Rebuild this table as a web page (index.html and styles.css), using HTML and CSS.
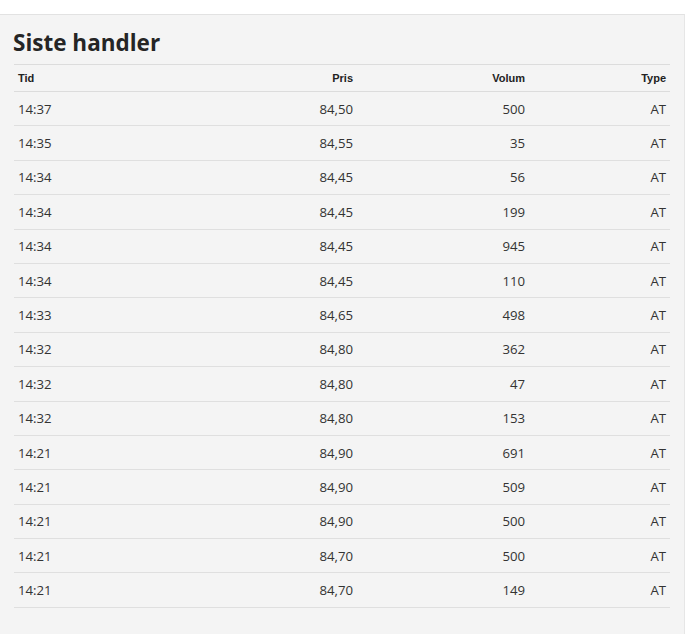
FILE: index.html
```html
<!DOCTYPE html>
<html lang="no">
<head>
<meta charset="utf-8">
<link rel="stylesheet" href="styles.css">
</head>
<body>
<div class="top"></div>
<section class="panel">
  <h2 class="title">Siste handler</h2>
  <table class="trades">
    <colgroup><col class="c1"><col class="c2"><col class="c3"><col class="c4"></colgroup>
    <thead>
      <tr><th class="l">Tid</th><th>Pris</th><th>Volum</th><th>Type</th></tr>
    </thead>
    <tbody>
      <tr><td class="l">14:37</td><td>84,50</td><td>500</td><td>AT</td></tr>
      <tr><td class="l">14:35</td><td>84,55</td><td>35</td><td>AT</td></tr>
      <tr><td class="l">14:34</td><td>84,45</td><td>56</td><td>AT</td></tr>
      <tr><td class="l">14:34</td><td>84,45</td><td>199</td><td>AT</td></tr>
      <tr><td class="l">14:34</td><td>84,45</td><td>945</td><td>AT</td></tr>
      <tr><td class="l">14:34</td><td>84,45</td><td>110</td><td>AT</td></tr>
      <tr><td class="l">14:33</td><td>84,65</td><td>498</td><td>AT</td></tr>
      <tr><td class="l">14:32</td><td>84,80</td><td>362</td><td>AT</td></tr>
      <tr><td class="l">14:32</td><td>84,80</td><td>47</td><td>AT</td></tr>
      <tr><td class="l">14:32</td><td>84,80</td><td>153</td><td>AT</td></tr>
      <tr><td class="l">14:21</td><td>84,90</td><td>691</td><td>AT</td></tr>
      <tr><td class="l">14:21</td><td>84,90</td><td>509</td><td>AT</td></tr>
      <tr><td class="l">14:21</td><td>84,90</td><td>500</td><td>AT</td></tr>
      <tr><td class="l">14:21</td><td>84,70</td><td>500</td><td>AT</td></tr>
      <tr><td class="l">14:21</td><td>84,70</td><td>149</td><td>AT</td></tr>
    </tbody>
  </table>
</section>
</body>
</html>
```
FILE: styles.css
```css
html, body {
  margin: 0;
  padding: 0;
  background: #ffffff;
}
body {
  font-family: "Open Sans", sans-serif;
  color: #333;
  width: 690px;
  height: 634px;
  overflow: hidden;
}
.top {
  height: 14px;
}
.panel {
  width: 685px;
  height: 620px;
  box-sizing: border-box;
  background: #f4f4f4;
  border-top: 1px solid #e2e2e2;
  border-right: 1px solid #e6e6e6;
  padding: 15px 15px 0 13px;
}
.title {
  margin: 0 0 8px 0;
  font-size: 22.5px;
  font-weight: 700;
  line-height: 26px;
  color: #252525;
}
.trades {
  width: 656px;
  margin-left: 1px;
  border-collapse: collapse;
  table-layout: fixed;
}
.c1 { width: 171px; }
.c2 { width: 172px; }
.c3 { width: 172px; }
.c4 { width: 141px; }
.trades th {
  font-family: "Liberation Sans", Arial, sans-serif;
  font-size: 11px;
  font-weight: 700;
  color: #222;
  text-align: right;
  padding: 0 4px;
  height: 26px;
  border-top: 1px solid #dcdcdc;
  border-bottom: 1px solid #dcdcdc;
}
.trades td {
  font-size: 13.2px;
  color: #333;
  text-align: right;
  padding: 0 4px;
  height: 33.4px;
  border-bottom: 1px solid #dfdfdf;
}
.trades .l {
  text-align: left;
}
```
